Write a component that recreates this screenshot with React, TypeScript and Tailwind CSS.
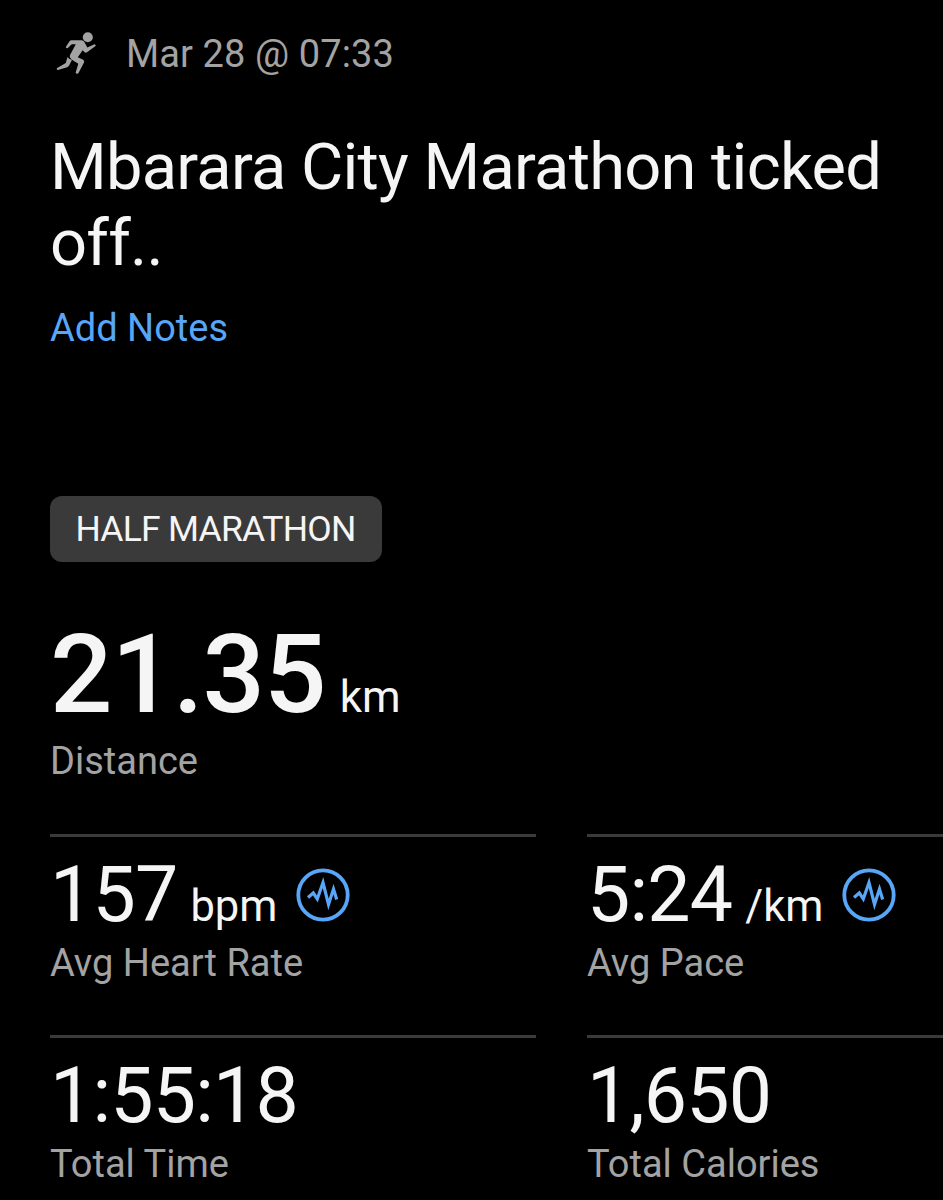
import React from "react";

function Runner() {
  return (
    <svg width="42" height="44" viewBox="0 0 42 44" className="shrink-0 fill-[#a3a3a3]">
      <circle cx="31.8" cy="5.2" r="5" />
      <path d="M15.5 8.2H25.5Q27.5 8.2 28.4 10L31.3 15.6L38.5 12.2Q40 12.2 39.6 14L31 20.3Q29.5 21.2 28.2 19.8L26.6 18.2L21.8 25.2L27.2 27.8Q28.8 28.8 28 30.5L22.5 41Q20.8 42.8 19.6 40.8L22.3 31.8L15.2 27.2Q13 25.5 14 23L19.8 12.2H15.8L11.8 16Q10 16.6 9.8 15L13.5 9.2Q14.2 8.2 15.5 8.2Z" />
      <path d="M11.5 25Q12.6 27 15.9 28L13 33.8Q12.3 34.8 11.2 35.2L2 38Q.2 37.8 .8 36.3L9.8 31Z" />
    </svg>
  );
}

function Pulse() {
  return (
    <svg width="54" height="54" viewBox="0 0 54 54" fill="none" className="shrink-0 stroke-[#58a6f8]">
      <circle cx="27" cy="27" r="24.7" strokeWidth="3.8" />
      <path d="M12 29.5L17.3 25L21.3 31L27 14.5L32.5 36.5L37.5 21L40.7 31.5" strokeWidth="3.2" strokeMiterlimit="4" />
    </svg>
  );
}

type StatProps = { value: string; unit?: string; label: string; pulse?: boolean };

function Stat({ value, unit, label, pulse }: StatProps) {
  return (
    <div className="h-[201px] border-t-[3px] border-[#3a3a3a] pt-[18px]">
      <div className="flex h-[80px] items-baseline whitespace-nowrap">
        <span className="text-[77px] leading-[80px] tracking-[-0.8px]">{value}</span>
        {unit && <span className="ml-[13px] text-[43.5px] leading-[50px]">{unit}</span>}
        {pulse && <span className="ml-[18.5px] mt-[13px] self-start"><Pulse /></span>}
      </div>
      <div className="mt-[6px] text-[38px] leading-[44px] text-[#a3a3a3]">{label}</div>
    </div>
  );
}

export default function App() {
  return (
    <main className="h-[1200px] w-[943px] overflow-hidden bg-black pl-[50px] pt-8 font-['Roboto',sans-serif] text-[#f5f5f5]">
      <div className="flex h-11 items-center pl-[6px] text-[38px] text-[#a3a3a3]">
        <Runner /><span className="ml-7 tracking-[0.1px]">Mar 28 @ 07:33</span>
      </div>
      <h1 className="mt-[53px] w-[860px] text-[65px] leading-[76px] tracking-[-0.75px]">Mbarara City Marathon ticked<br />off..</h1>
      <div className="mt-[25px] text-[38px] leading-[44px] text-[#58a6f8]">Add Notes</div>
      <div className="mt-[146px] flex h-[66px] w-[332px] items-center justify-center rounded-[12px] bg-[#3a3a3a] pr-px pt-px text-[35.5px] tracking-[-0.75px]">HALF MARATHON</div>
      <div className="mt-[53px] flex h-[120px] items-baseline">
        <span className="text-[110px] font-medium leading-[120px] tracking-[-1px]">21.35</span>
        <span className="ml-[14px] text-[44px]">km</span>
      </div>
      <div className="mt-1 text-[38px] leading-[44px] text-[#a3a3a3]">Distance</div>
      <div className="mt-[51px] grid grid-cols-[486px_486px] gap-x-[51px]">
        <Stat value="157" unit="bpm" label="Avg Heart Rate" pulse />
        <Stat value="5:24" unit="/km" label="Avg Pace" pulse />
        <Stat value="1:55:18" label="Total Time" />
        <Stat value="1,650" label="Total Calories" />
      </div>
    </main>
  );
}
